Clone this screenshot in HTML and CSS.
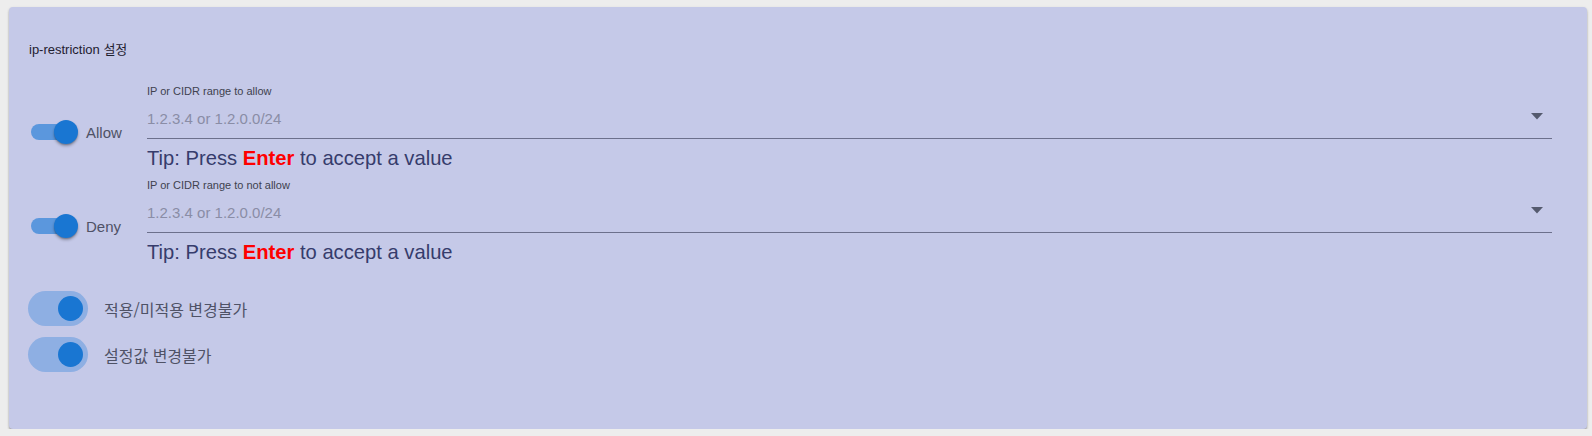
FILE: index.html
```html
<!DOCTYPE html>
<html lang="ko">
<head>
<meta charset="utf-8">
<title>ip-restriction 설정</title>
<link rel="stylesheet" href="styles.css">
</head>
<body>
<div class="card">
  <div class="title">ip-restriction 설정</div>

  <div class="rule-row">
    <div class="rule-toggle">
      <span class="sw-small"><span class="sw-small-track"></span><span class="sw-small-thumb"></span></span>
      <span class="rule-name">Allow</span>
    </div>
    <div class="field">
      <div class="field-label">IP or CIDR range to allow</div>
      <div class="field-input">
        <span class="placeholder">1.2.3.4 or 1.2.0.0/24</span>
        <svg class="arrow" width="12" height="7" viewBox="0 0 12 7"><path d="M0 0h12L6 6.5z" fill="#555a6e"/></svg>
      </div>
      <div class="tip">Tip: Press <b>Enter</b> to accept a value</div>
    </div>
  </div>

  <div class="rule-row">
    <div class="rule-toggle">
      <span class="sw-small"><span class="sw-small-track"></span><span class="sw-small-thumb"></span></span>
      <span class="rule-name">Deny</span>
    </div>
    <div class="field">
      <div class="field-label">IP or CIDR range to not allow</div>
      <div class="field-input">
        <span class="placeholder">1.2.3.4 or 1.2.0.0/24</span>
        <svg class="arrow" width="12" height="7" viewBox="0 0 12 7"><path d="M0 0h12L6 6.5z" fill="#555a6e"/></svg>
      </div>
      <div class="tip">Tip: Press <b>Enter</b> to accept a value</div>
    </div>
  </div>

  <div class="options">
    <div class="option">
      <span class="sw-big"><span class="sw-big-thumb"></span></span>
      <span class="option-label">적용/미적용 변경불가</span>
    </div>
    <div class="option">
      <span class="sw-big"><span class="sw-big-thumb"></span></span>
      <span class="option-label">설정값 변경불가</span>
    </div>
  </div>
</div>
</body>
</html>
```
FILE: styles.css
```css
html, body {
  margin: 0;
  padding: 0;
  background: #ededed;
}
body {
  padding: 7px 5px 0 9px;
  font-family: "Liberation Sans", Arial, "Noto Sans CJK KR", sans-serif;
}
.card {
  box-sizing: border-box;
  width: 1578px;
  height: 422px;
  background: #c5c9e8;
  border-radius: 4px;
  box-shadow: 0 2px 2px rgba(0,0,0,0.25), 0 1px 3px rgba(0,0,0,0.12);
  padding: 35px 35px 0 20px;
}
.title {
  font-size: 13px;
  line-height: 16px;
  color: #1f2030;
  height: 16px;
}
.rule-row {
  display: flex;
  align-items: flex-start;
  margin-top: 27px;
}
.rule-row + .rule-row {
  margin-top: 9px;
}
.rule-toggle {
  width: 118px;
  flex: none;
  display: flex;
  align-items: center;
  padding-top: 34px;
  padding-left: 2px;
  box-sizing: border-box;
}
.sw-small {
  position: relative;
  width: 47px;
  height: 26px;
  flex: none;
  display: block;
}
.sw-small-track {
  position: absolute;
  left: 0;
  top: 5px;
  width: 44px;
  height: 16px;
  border-radius: 8px;
  background: #5b97dd;
}
.sw-small-thumb {
  position: absolute;
  right: 0;
  top: 1px;
  width: 24px;
  height: 24px;
  border-radius: 50%;
  background: #1976d2;
  box-shadow: 0 2px 3px rgba(0,0,0,0.3), 0 1px 1px rgba(0,0,0,0.15);
}
.rule-name {
  margin-left: 8px;
  font-size: 15px;
  color: #4f5266;
}
.field {
  flex: 1;
  min-width: 0;
}
.field-label {
  font-size: 11px;
  line-height: 13px;
  color: #40424f;
}
.field-input {
  border-bottom: 1px solid #6c708c;
  display: flex;
  align-items: center;
  justify-content: space-between;
  padding-bottom: 0;
  box-sizing: content-box;
  height: 40px;
}
.placeholder {
  font-size: 15px;
  color: #8a8da6;
}
.arrow {
  margin-right: 9px;
  margin-top: -3px;
}
.tip {
  margin-top: 7px;
  font-size: 20.2px;
  line-height: 24px;
  color: #363c6c;
}
.tip b {
  color: #ff0000;
  font-weight: bold;
}
.options {
  margin-top: 27px;
  display: flex;
  flex-direction: column;
  gap: 11px;
}
.option {
  display: flex;
  align-items: center;
  height: 35px;
}
.sw-big {
  position: relative;
  width: 60px;
  height: 35px;
  border-radius: 18px;
  background: #8eafe3;
  flex: none;
  margin-left: -1px;
}
.sw-big-thumb {
  position: absolute;
  right: 5px;
  top: 5px;
  width: 25px;
  height: 25px;
  border-radius: 50%;
  background: #1976d2;
}
.option-label {
  margin-left: 16px;
  font-size: 16px;
  color: #4f5266;
  font-family: "Noto Sans CJK KR", "Liberation Sans", sans-serif;
}
```
